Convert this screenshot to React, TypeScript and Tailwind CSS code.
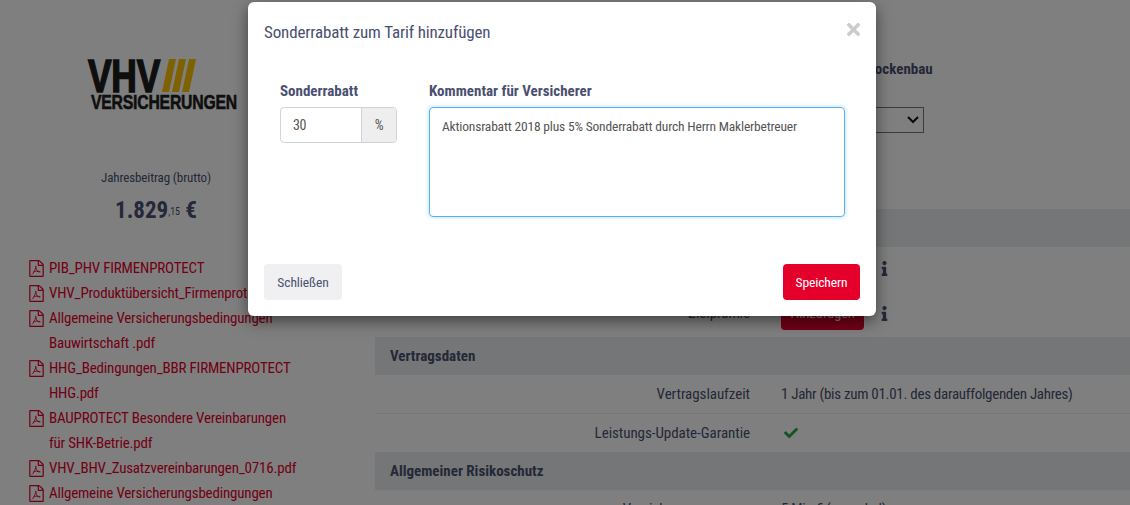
import type { ReactNode } from 'react'
import { FaCheck, FaInfo, FaTimes } from 'react-icons/fa'

const docs = [
  'PIB_PHV FIRMENPROTECT',
  'VHV_Produktübersicht_Firmenprotect',
  'Allgemeine Versicherungsbedingungen Bauwirtschaft .pdf',
  'HHG_Bedingungen_BBR FIRMENPROTECT HHG.pdf',
  'BAUPROTECT Besondere Vereinbarungen für SHK-Betrie.pdf',
  'VHV_BHV_Zusatzvereinbarungen_0716.pdf',
  'Allgemeine Versicherungsbedingungen',
]

function PdfIcon() {
  return (
    <svg viewBox="128 0 1536 1792" className="mt-[4px] h-[17px] w-[15px] shrink-0" fill="currentColor">
      <path d="M1596 380q28 28 48 76t20 88v1152q0 40-28 68t-68 28h-1344q-40 0-68-28t-28-68v-1600q0-40 28-68t68-28h896q40 0 88 20t76 48zm-444-244v376h376q-10-29-22-41l-313-313q-12-12-41-22zm384 1528v-1024h-416q-40 0-68-28t-28-68v-416h-768v1536h1280z" />
      <path
        d="M420 1510C560 1410 760 1030 810 780C780 650 810 590 840 650C860 760 800 980 1030 1190C1190 1210 1330 1200 1280 1270C1160 1280 970 1180 890 1170C750 1190 620 1250 530 1300"
        fill="none"
        stroke="currentColor"
        strokeWidth="90"
      />
    </svg>
  )
}

function Logo() {
  return (
    <svg width="152" height="52" viewBox="0 0 152 52" className="ml-[86px]">
      <text x="2" y="33" fontFamily="Liberation Sans" fontWeight="700" fontSize="46" textLength="72" lengthAdjust="spacingAndGlyphs" fill="#1d1d1d" stroke="#1d1d1d" strokeWidth="1.6">
        VHV
      </text>
      <polygon points="83,0 90,0 83,33 76,33" fill="#fdc300" />
      <polygon points="93,0 100,0 93,33 86,33" fill="#fdc300" />
      <polygon points="103,0 110,0 103,33 96,33" fill="#fdc300" />
      <text x="5" y="50" fontFamily="Liberation Sans" fontWeight="700" fontSize="21" textLength="146" lengthAdjust="spacingAndGlyphs" fill="#1d1d1d" stroke="#1d1d1d" strokeWidth="0.6">
        VERSICHERUNGEN
      </text>
    </svg>
  )
}

function Sidebar() {
  return (
    <aside className="w-[375px] shrink-0 pt-[59px]">
      <Logo />
      <div className="w-[312px] mt-[57px] text-center text-[13px] leading-[20px] tracking-[-0.1px]">Jahresbeitrag (brutto)</div>
      <div className="w-[312px] mt-[8px] text-center text-[23px] leading-[30px] font-bold tracking-normal">
        1.829<span className="text-[10px] font-normal align-[3px]">,15</span> €
      </div>
      <ul className="mt-[29px] pl-[29px] leading-[25px] tracking-[-0.19px] text-[#e4002b]">
        {docs.map((d) => (
          <li key={d} className="flex gap-[5px]">
            <PdfIcon />
            <span className="w-[250px]">{d}</span>
          </li>
        ))}
      </ul>
    </aside>
  )
}

function SectionBar({ title }: { title: string }) {
  return <div className="h-[38px] pl-[15px] bg-[#e9ecef] font-bold leading-[38px] tracking-normal">{title}</div>
}

function Row({ label, children, className }: { label: string; children: ReactNode; className: string }) {
  return (
    <div className={`flex items-center ${className}`}>
      <div className="w-[375px] text-right tracking-[-0.05px]">{label}</div>
      <div className="ml-[31px] flex items-center">{children}</div>
    </div>
  )
}

function Main() {
  return (
    <main className="flex-1">
      <div className="h-[209px] pl-[406px] pt-[59px]">
        <div className="font-bold leading-[20px] whitespace-nowrap tracking-normal">Hochbau und Trockenbau</div>
        <div className="relative mt-[28px] w-[143px] h-[26px]">
          <select className="block w-full h-full appearance-none border border-[#767676] rounded-none" />
          <svg viewBox="0 0 12 8" className="absolute right-[5px] top-[9px] h-[8px] w-[12px]" fill="none" stroke="#111111" strokeWidth="2">
            <path d="M1 1l5 5 5-5" />
          </svg>
        </div>
      </div>
      <SectionBar title="Tarifoptionen" />
      <Row label="Selbstbeteiligung" className="h-[43px]">
        <span className="w-[96px]">keine</span>
        <FaInfo className="text-[15px] text-[#4a5070]" />
      </Row>
      <Row label="Zielprämie" className="h-[47px]">
        <button className="w-[83px] h-[32px] rounded-[4px] bg-[#e4002b] text-white">Hinzufügen</button>
        <FaInfo className="ml-[13px] text-[15px] text-[#4a5070]" />
      </Row>
      <SectionBar title="Vertragsdaten" />
      <Row label="Vertragslaufzeit" className="h-[39px] border-b border-[#e9ecef]">
        1 Jahr (bis zum 01.01. des darauffolgenden Jahres)
      </Row>
      <Row label="Leistungs-Update-Garantie" className="h-[38px]">
        <FaCheck className="ml-[3px] text-[14px] text-[#28a745]" />
      </Row>
      <SectionBar title="Allgemeiner Risikoschutz" />
      <Row label="Versicherungssumme" className="h-[39px]">
        5 Mio € (pauschal)
      </Row>
    </main>
  )
}

export default function App() {
  return (
    <div className="relative h-[505px] w-[1130px] overflow-hidden bg-white text-[#4a5070] font-['Roboto',sans-serif] [font-stretch:75%] text-[15px] tracking-[-0.29px]">
      <div className="flex">
        <Sidebar />
        <Main />
      </div>
      <div className="absolute inset-0 bg-black/50" />
      <div className="absolute left-[248px] top-[2px] w-[628px] h-[314px] bg-white rounded-[6px] shadow-[0_5px_15px_rgba(0,0,0,0.5)] flex flex-col">
        <div className="flex justify-between pl-[16px] pr-[13px] pt-[18px] h-[60px]">
          <h5 className="text-[17px] leading-[24px] tracking-[-0.15px]">Sonderrabatt zum Tarif hinzufügen</h5>
          <FaTimes className="text-[19px] text-[#cccccc]" />
        </div>
        <div className="flex gap-[32px] pl-[32px] pt-[19px] h-[202px]">
          <div>
            <label className="block font-bold leading-[20px] mb-[6px] tracking-normal">Sonderrabatt</label>
            <div className="flex w-[117px] h-[36px] border border-[#ced4da] rounded-[4px] text-[14px] text-[#555] overflow-hidden">
              <div className="w-[80px] pl-[12px] leading-[34px]">30</div>
              <div className="flex-1 border-l border-[#ced4da] bg-[#eeeeee] text-center leading-[34px]">%</div>
            </div>
          </div>
          <div>
            <label className="block font-bold leading-[20px] mb-[6px] tracking-normal">Kommentar für Versicherer</label>
            <div className="w-[416px] h-[110px] border border-[#5db0ee] rounded-[4px] shadow-[0_0_4px_rgba(93,176,238,0.5)] px-[12px] py-[8px] text-[13.5px] leading-[20px] tracking-[-0.18px] text-[#555]">
              Aktionsrabatt 2018 plus 5% Sonderrabatt durch Herrn Maklerbetreuer
            </div>
          </div>
        </div>
        <div className="flex justify-between px-[16px] text-[13.5px] tracking-[-0.1px]">
          <button className="w-[78px] h-[36px] pt-[1px] rounded-[4px] bg-[#f0f0f2]">Schließen</button>
          <button className="w-[77px] h-[36px] pt-[1px] rounded-[4px] bg-[#e4002b] text-white">Speichern</button>
        </div>
      </div>
    </div>
  )
}
